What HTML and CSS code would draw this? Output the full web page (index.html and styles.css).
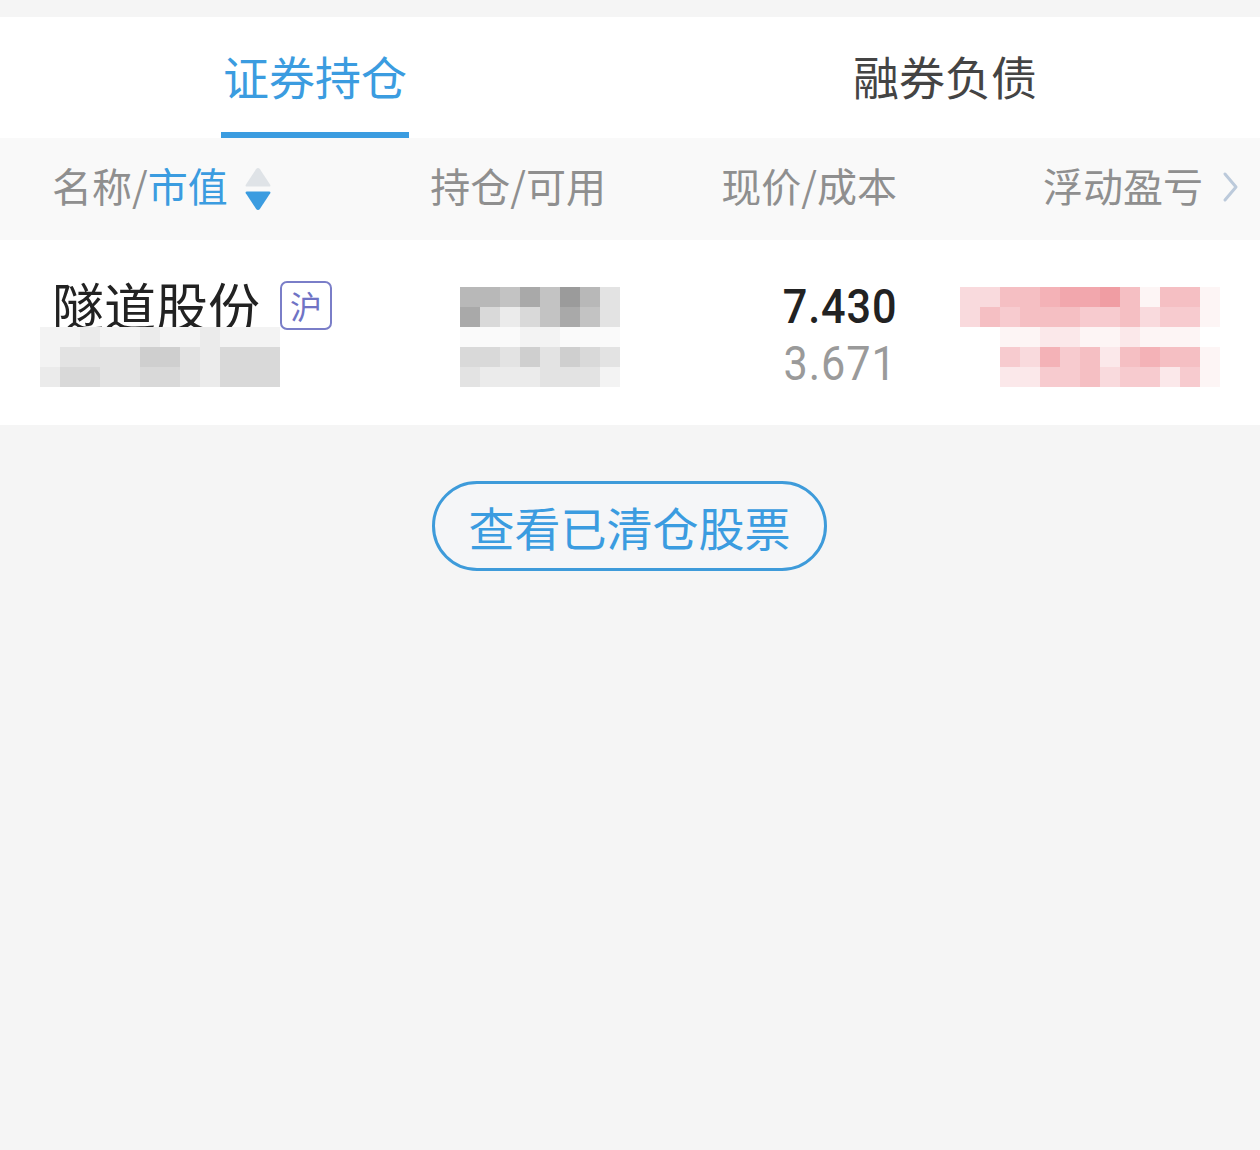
FILE: index.html
```html
<!DOCTYPE html>
<html lang="zh-CN">
<head>
<meta charset="utf-8">
<title>证券持仓</title>
<link rel="stylesheet" href="styles.css">
</head>
<body>
<div class="page">
  <div class="tabs">
    <div class="tab"><span class="tab-label active">证券持仓</span></div>
    <div class="tab"><span class="tab-label">融券负债</span></div>
  </div>

  <div class="head-row">
    <div class="h-name">名称/<span class="blue">市值</span>
      <svg class="sort" width="28" height="46" viewBox="0 0 28 46">
        <path d="M14 2 Q15.2 2 16 3.2 L26.2 18.8 Q27 20.5 25 20.5 L3 20.5 Q1 20.5 1.8 18.8 L12 3.2 Q12.8 2 14 2 Z" fill="#dfe3e7"/>
        <path d="M14 44 Q15.2 44 16 42.8 L26.2 27.2 Q27 25.5 25 25.5 L3 25.5 Q1 25.5 1.8 27.2 L12 42.8 Q12.8 44 14 44 Z" fill="#3b9ce0"/>
      </svg>
    </div>
    <div class="h-col">持仓/可用</div>
    <div class="h-col">现价/成本</div>
    <div class="h-col">浮动盈亏</div>
    <div class="h-chev">
      <svg width="22" height="32" viewBox="0 0 22 32"><path d="M5 3 L16 16 L5 29" fill="none" stroke="#bccadb" stroke-width="3" stroke-linecap="round" stroke-linejoin="round"/></svg>
    </div>
  </div>

  <div class="data-row">
    <div class="d-name">
      <div class="stock"><span class="stock-name">隧道股份</span><span class="badge">沪</span></div>
      <div class="mosaic m-name">
        <span class="t1"></span><span class="t1"></span><span class="t2"></span><span class="t1"></span><span class="t1"></span><span class="t2"></span><span class="t1"></span><span class="t1"></span><span class="t2"></span><span class="t1"></span><span class="t1"></span><span class="t1"></span>
        <span class="t1"></span><span class="t3"></span><span class="t3"></span><span class="t3"></span><span class="t3"></span><span class="t5"></span><span class="t5"></span><span class="t3"></span><span class="t2"></span><span class="t4"></span><span class="t4"></span><span class="t4"></span>
        <span class="t2"></span><span class="t4"></span><span class="t4"></span><span class="t3"></span><span class="t3"></span><span class="t4"></span><span class="t4"></span><span class="t3"></span><span class="t2"></span><span class="t4"></span><span class="t4"></span><span class="t4"></span>
      </div>
    </div>
    <div class="d-hold">
      <div class="mosaic m-hold">
        <span class="t7"></span><span class="t7"></span><span class="t6"></span><span class="t8"></span><span class="t6"></span><span class="t9"></span><span class="t7"></span><span class="t3"></span>
        <span class="t8"></span><span class="t4"></span><span class="t2"></span><span class="t4"></span><span class="t6"></span><span class="t8"></span><span class="t6"></span><span class="t3"></span>
        <span class="t0"></span><span class="t0"></span><span class="t0"></span><span class="t1"></span><span class="t1"></span><span class="t0"></span><span class="t0"></span><span class="t0"></span>
        <span class="t4"></span><span class="t4"></span><span class="t3"></span><span class="t5"></span><span class="t3"></span><span class="t5"></span><span class="t4"></span><span class="t3"></span>
        <span class="t3"></span><span class="t2"></span><span class="t2"></span><span class="t2"></span><span class="t3"></span><span class="t3"></span><span class="t3"></span><span class="t1"></span>
      </div>
    </div>
    <div class="d-price">
      <div class="num price">7.430</div>
      <div class="num cost">3.671</div>
    </div>
    <div class="d-pl">
      <div class="mosaic m-pl">
        <span class="p2"></span><span class="p2"></span><span class="p4"></span><span class="p4"></span><span class="p5"></span><span class="p6"></span><span class="p6"></span><span class="p7"></span><span class="p4"></span><span class="p0"></span><span class="p4"></span><span class="p4"></span><span class="p0"></span>
        <span class="p2"></span><span class="p4"></span><span class="p3"></span><span class="p4"></span><span class="p4"></span><span class="p4"></span><span class="p3"></span><span class="p3"></span><span class="p4"></span><span class="p2"></span><span class="p3"></span><span class="p3"></span><span class="p0"></span>
        <span class="w"></span><span class="w"></span><span class="p0"></span><span class="p0"></span><span class="p1"></span><span class="p1"></span><span class="p0"></span><span class="p0"></span><span class="p1"></span><span class="p0"></span><span class="p0"></span><span class="p0"></span><span class="w"></span>
        <span class="w"></span><span class="w"></span><span class="p3"></span><span class="p2"></span><span class="p5"></span><span class="p3"></span><span class="p4"></span><span class="p1"></span><span class="p4"></span><span class="p5"></span><span class="p4"></span><span class="p4"></span><span class="p0"></span>
        <span class="w"></span><span class="w"></span><span class="p1"></span><span class="p1"></span><span class="p3"></span><span class="p3"></span><span class="p4"></span><span class="p2"></span><span class="p3"></span><span class="p3"></span><span class="p1"></span><span class="p3"></span><span class="p0"></span>
      </div>
    </div>
  </div>

  <div class="actions">
    <button class="cleared-btn" type="button">查看已清仓股票</button>
  </div>
</div>
</body>
</html>
```

FILE: styles.css
```css
* { box-sizing: border-box; }

html, body {
  margin: 0;
  padding: 0;
  background: #f5f5f5;
}

body {
  font-family: "Noto Sans CJK SC", "Noto Sans", sans-serif;
  width: 1260px;
  height: 1150px;
  overflow: hidden;
}

.page {
  padding-top: 17px;
}

/* Tabs */
.tabs {
  display: grid;
  grid-template-columns: 1fr 1fr;
  height: 121px;
  background: #ffffff;
}

.tab {
  display: flex;
  justify-content: center;
  align-items: flex-end;
}

.tab-label {
  font-size: 46px;
  line-height: 60px;
  color: #444444;
  padding: 0 2px 27px;
  border-bottom: 6px solid transparent;
}

.tab-label.active {
  color: #3b9ce0;
  border-bottom-color: #3b9ce0;
}

/* Header row */
.head-row,
.data-row {
  display: grid;
  grid-template-columns: 280px 274px 291px 306px 39px;
  padding: 0 18px 0 52px;
}

.head-row {
  height: 102px;
  background: #f9f9f9;
  align-items: center;
  font-size: 40px;
  line-height: 50px;
  color: #8f8f8f;
}

.h-name,
.h-col {
  margin-top: -8px;
}

.h-name {
  display: flex;
  align-items: center;
  white-space: nowrap;
}

.blue { color: #3b9ce0; }

.sort {
  margin-left: 16px;
  margin-top: 8px;
  display: block;
}

.h-col {
  text-align: right;
  white-space: nowrap;
}

.h-chev {
  display: flex;
  justify-content: flex-end;
  align-items: center;
  margin-top: -4px;
}

/* Data row */
.data-row {
  height: 185px;
  background: #ffffff;
  align-items: start;
}

.d-name {
  margin-top: 40px;
}

.stock {
  display: flex;
  align-items: center;
  height: 50px;
}

.stock-name {
  font-size: 52px;
  line-height: 50px;
  color: #222222;
  white-space: nowrap;
}

.badge {
  margin-left: 20px;
  width: 54px;
  height: 49px;
  border: 2px solid #7a7ec8;
  border-radius: 7px;
  color: #6f73c5;
  font-size: 32px;
  line-height: 45px;
  text-align: center;
}

.mosaic {
  display: grid;
  grid-auto-rows: 20px;
}

.mosaic span { display: block; }

.m-name {
  margin-top: -3px;
  margin-left: -12px;
  grid-template-columns: repeat(12, 20px);
}

.d-hold {
  margin-top: 47px;
  display: flex;
  justify-content: flex-end;
  margin-right: -14px;
}

.m-hold {
  grid-template-columns: repeat(8, 20px);
}

.d-price {
  margin-top: 38px;
  display: flex;
  flex-direction: column;
  align-items: flex-end;
  font-family: "Roboto", "DejaVu Sans Condensed", sans-serif;
  font-size: 48px;
  line-height: 57px;
}

.num {
  transform: scaleX(0.9);
  transform-origin: right center;
  letter-spacing: 1px;
}

.price { color: #222222; font-weight: 500; }
.cost { color: #9a9a9a; font-weight: 400; }

.d-pl {
  grid-column: 4 / 6;
  margin-top: 47px;
  margin-left: 63px;
}

.m-pl {
  grid-template-columns: repeat(13, 20px);
}

.t0 { background: #fafafa; }
.t1 { background: #f3f3f3; }
.t2 { background: #ebebeb; }
.t3 { background: #e3e3e3; }
.t4 { background: #d9d9d9; }
.t5 { background: #cfcfcf; }
.t6 { background: #c3c3c3; }
.t7 { background: #b8b8b8; }
.t8 { background: #a9a9a9; }
.t9 { background: #9b9b9b; }

.w  { background: #ffffff; }
.p0 { background: #fdf5f5; }
.p1 { background: #fbe8ea; }
.p2 { background: #f9dadd; }
.p3 { background: #f7cbcf; }
.p4 { background: #f5bfc3; }
.p5 { background: #f4b2b7; }
.p6 { background: #f2a7ad; }
.p7 { background: #f09da3; }

/* Button */
.actions {
  display: flex;
  justify-content: center;
  padding-top: 56px;
}

.cleared-btn {
  margin-left: -1px;
  width: 395px;
  height: 90px;
  border: 3px solid #3e9bda;
  border-radius: 45px;
  background: #f5f6f8;
  color: #3b9ce0;
  font-family: "Noto Sans CJK SC", "Noto Sans", sans-serif;
  font-size: 46px;
  line-height: 84px;
  padding: 0;
  text-align: center;
}
```
